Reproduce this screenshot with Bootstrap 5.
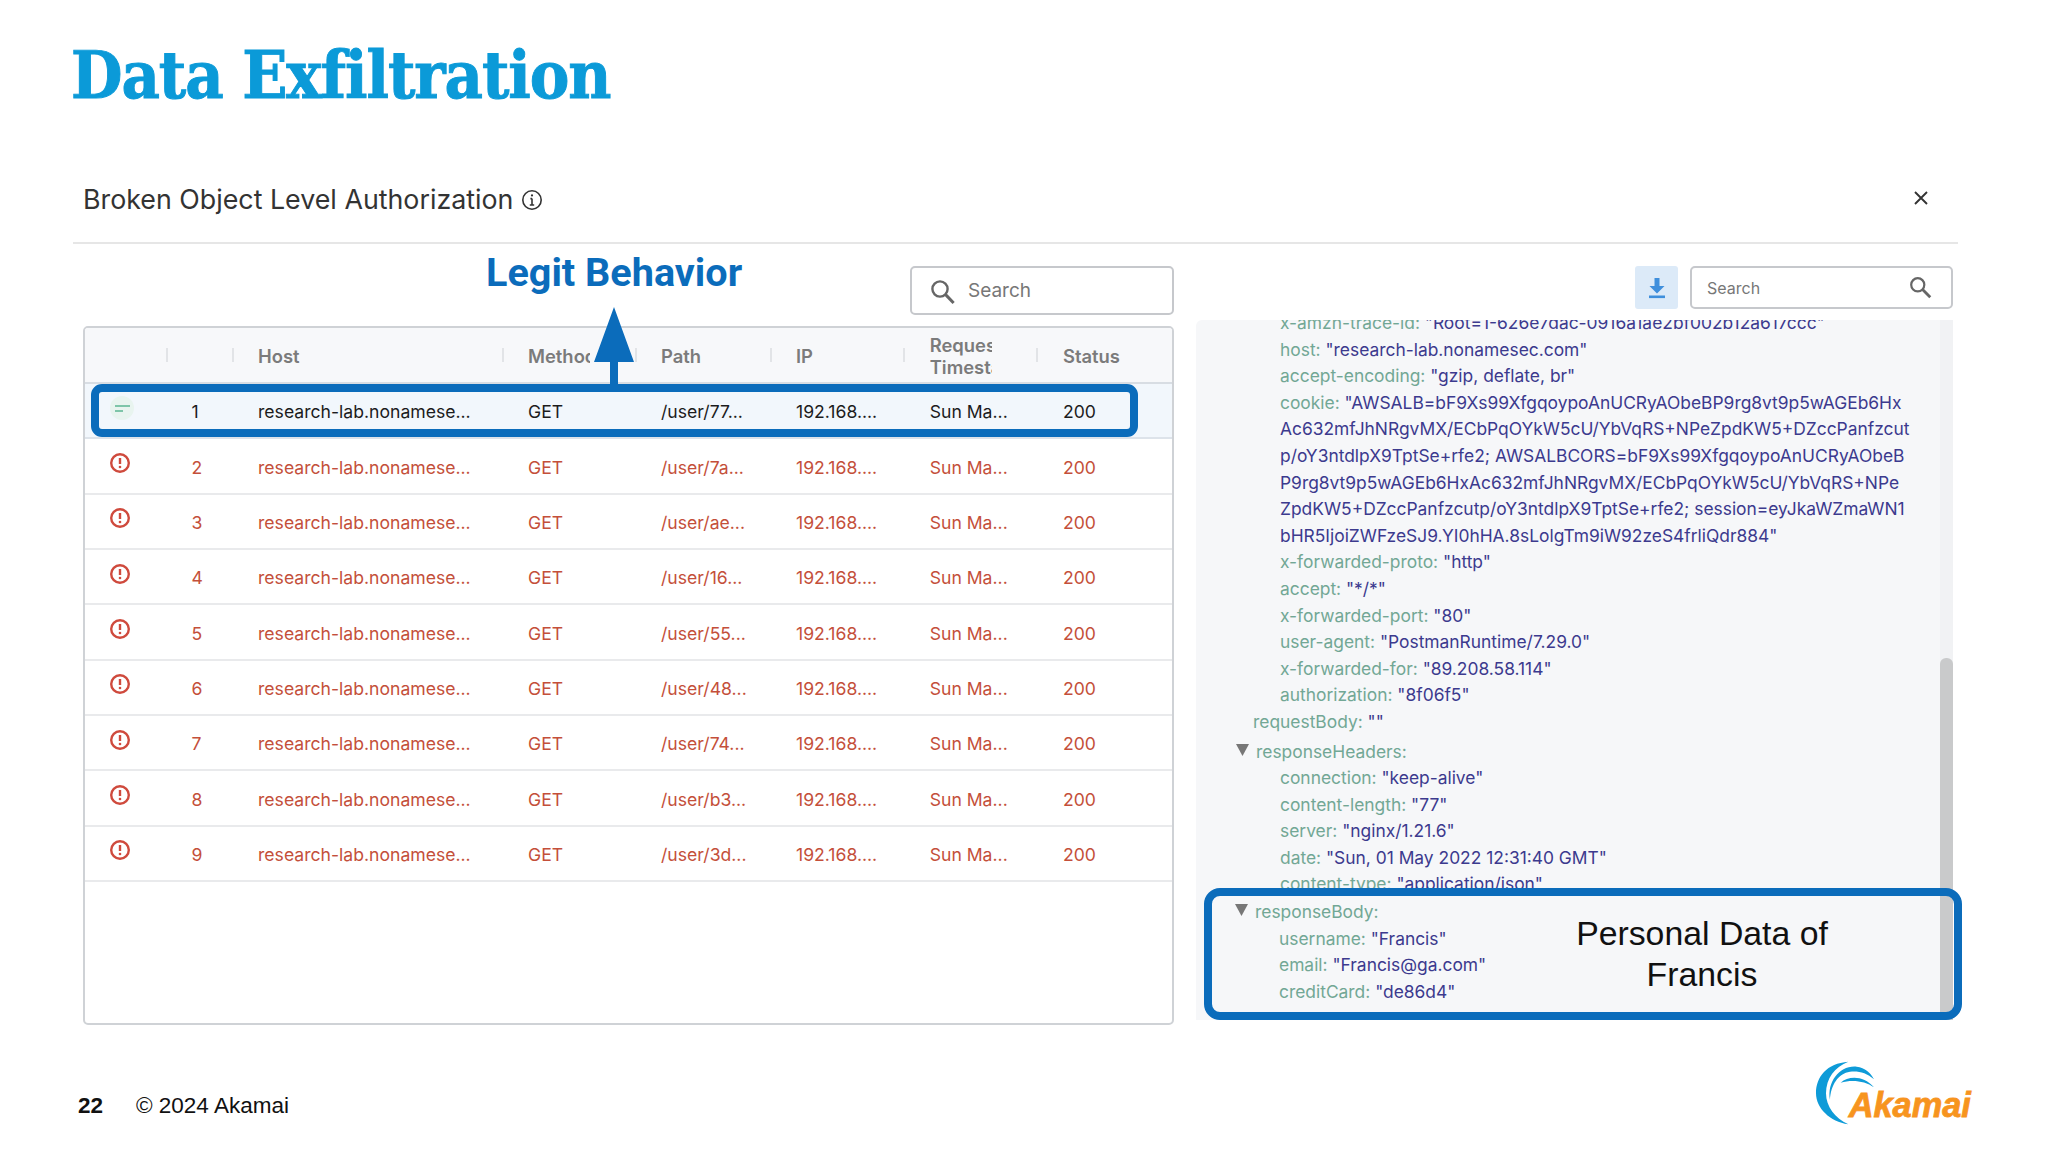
<!DOCTYPE html>
<html lang="en">
<head>
<meta charset="utf-8">
<title>Data Exfiltration</title>
<link href="https://cdn.jsdelivr.net/npm/bootstrap@5.3.0/dist/css/bootstrap.min.css" rel="stylesheet">
<style>
html,body{margin:0;background:#fff;}
.slide{width:2048px;height:1152px;overflow:hidden;font-family:Inter,"Liberation Sans",sans-serif;background:#fff;}
.deck-head{height:165px;padding:27px 0 0 71px;}
.deck-title{font-family:"DejaVu Serif Condensed","DejaVu Serif",serif;font-weight:700;font-size:66px;line-height:96px;letter-spacing:-1.08px;-webkit-text-stroke:.9px #0b9ad8;color:#0b9ad8;margin:0;}
.bar{height:79px;margin-left:73px;width:1885px;border-bottom:2px solid #e6e6e6;padding:0 29px 12px 10px;}
.bar-left{padding-top:4px;}
.bar-title{font-size:26.8px;color:#333;font-weight:400;margin:0;}
.main{padding:22px 0 0 83px;gap:22px;}
.left{width:1091px;height:759px;}
.right{width:757px;height:759px;}
.search-left{width:264px;height:49px;border:2px solid #c6c8cc;border-radius:5px;padding:2px 0 0 18px;gap:12px;font-size:19px;color:#777;margin-bottom:11px;}
.grid-box{height:699px;border:2px solid #cfd2d6;border-radius:5px;overflow:hidden;}
.req{table-layout:fixed;width:100%;margin:0;font-size:17.6px;--bs-table-bg:transparent;}
.req th{height:55px;background:#f7f8fa;color:#7b7b7b;font-weight:600;font-size:18.4px;line-height:22px;padding:2px 0 0 26.5px;vertical-align:middle;border-bottom:2px solid #d8dde3;position:relative;}
.req th.sep::before{content:"";position:absolute;left:0;top:20px;height:14px;width:2px;background:#e2e4e7;}
.req td{height:55.33px;padding:4px 0 0 26.5px;vertical-align:middle;border-bottom:2px solid #e9eaec;color:#c44f3a;white-space:nowrap;}
.req td.ico{padding:0 0 8px 25px;}
.req td.num{padding-left:26px;}
.req tr.pick td{background:#f2f7fc;color:#1c1c1c;border-bottom-color:#dde3ea;}
.clip-w{display:block;width:62px;overflow:hidden;white-space:nowrap;}
.clip-m{display:block;width:62px;overflow:hidden;white-space:nowrap;}
.row-frame{position:absolute;left:8px;top:118px;width:1047px;height:53px;border:8px solid #0b6cbb;border-radius:11px;}
.legit{position:absolute;left:403px;top:-17px;font-family:Roboto,sans-serif;font-weight:700;font-size:39.6px;line-height:48px;color:#0b6cbb;white-space:nowrap;}
.up-arrow{position:absolute;left:510px;top:41px;}
.right-top{gap:12px;height:43px;margin-bottom:11px;}
.dl-btn{width:43px;height:43px;background:#dceaf8;border:0;border-radius:3px;padding:0;}
.search-right{width:263px;height:43px;border:2px solid #c6c8cc;border-radius:5px;padding:0 19px 0 15px;font-size:16px;color:#777;}
.panel{height:700px;background:#f6f7f9;border-radius:6px 6px 0 0;}
.track{position:absolute;right:0;top:0;bottom:0;width:13px;background:#f1f2f4;}
.thumb{position:absolute;right:0;top:338px;bottom:0;width:13px;background:#c9cacb;border-radius:6px 6px 0 0;}
.json-clip{height:568px;overflow:hidden;}
.json{margin-top:-10px;padding-left:84px;font-size:17.4px;line-height:26.6px;white-space:nowrap;}
.line-k{color:#72a795;}
.line-v{color:#3c3a8e;}
.lvl1{margin-left:-27px;}
.tree{margin-left:-24px;position:relative;margin-top:3px;}
.tri{position:absolute;left:-20px;top:5px;}
.resp-frame{position:relative;height:132px;margin:0 -9px 0 8px;border:8px solid #0b6cbb;border-radius:16px;font-size:17.4px;line-height:26.6px;white-space:nowrap;}
.resp-data{width:290px;padding:0 0 0 67px;}
.resp-note{width:400px;font-family:"Liberation Sans",Arial,sans-serif;font-size:33.8px;line-height:40.5px;color:#111;text-align:center;padding-top:17px;}
.foot{padding:0 28px 0 78px;height:127px;font-family:"Liberation Sans",Arial,sans-serif;font-size:22.5px;color:#111;}
.page-no{font-weight:700;width:58px;}
.foot-text{padding-top:64px;}
.logo{margin-top:15px;}
.logo-txt{font-family:"Liberation Sans",Arial,sans-serif;font-weight:700;font-style:italic;font-size:103px;fill:#f7941e;stroke:#f7941e;stroke-width:2.5px;}
</style>
</head>
<body>
<div class="slide">
  <div class="deck-head"><h1 class="deck-title">Data Exfiltration</h1></div>
  <div class="bar d-flex justify-content-between align-items-center">
    <div class="bar-left d-flex align-items-center gap-2">
      <h2 class="bar-title">Broken Object Level Authorization</h2>
      <svg width="22" height="22" viewBox="0 0 22 22" fill="none" stroke="#333" stroke-width="1.6"><circle cx="11" cy="11" r="9.2"/><path d="M11 9.6v6.4M8.8 16h4.4M9.4 9.6H11"/><circle cx="11" cy="6.4" r="1.1" fill="#333" stroke="none"/></svg>
    </div>
    <svg width="16" height="16" viewBox="0 0 16 16" stroke="#333" stroke-width="1.9"><path d="M2 2l12 12M14 2L2 14"/></svg>
  </div>
  <div class="main d-flex">
    <div class="left position-relative">
      <div class="d-flex justify-content-end">
        <div class="search-left d-flex align-items-center">
          <svg width="26" height="26" viewBox="0 0 26 26" fill="none" stroke="#666" stroke-width="2.4"><circle cx="10" cy="10" r="7.6"/><path d="M15.6 15.6l8 8.4" stroke-width="3"/></svg>
          <span>Search</span>
        </div>
      </div>
      <div class="grid-box">
        <table class="req">
          <colgroup><col style="width:80.5px"><col style="width:66px"><col style="width:270px"><col style="width:133px"><col style="width:135px"><col style="width:133.7px"><col style="width:133.3px"><col></colgroup>
          <thead><tr><th></th><th class="sep"></th><th class="sep">Host</th><th class="sep"><span class="clip-m">Method</span></th><th class="sep">Path</th><th class="sep">IP</th><th class="sep"><span class="clip-w">Request</span><span class="clip-w">Timestamp</span></th><th class="sep">Status</th></tr></thead>
          <tbody id="rows"></tbody>
        </table>
      </div>
      <div class="row-frame"></div>
      <div class="legit">Legit Behavior</div>
      <svg class="up-arrow" width="42" height="80" viewBox="0 0 42 80"><path d="M21 0L41 55H25V80H17V55H1Z" fill="#0b6cbb"/></svg>
    </div>
    <div class="right">
      <div class="right-top d-flex justify-content-end">
        <button class="dl-btn d-flex align-items-center justify-content-center" type="button" aria-label="Download">
          <svg width="18" height="22" viewBox="0 0 18 22" fill="#3f8fdc"><path d="M6.5 1h5v8h5L9 16.5 1.5 9h5z"/><rect x="1" y="18.5" width="16" height="2.6"/></svg>
        </button>
        <div class="search-right d-flex align-items-center justify-content-between">
          <span>Search</span>
          <svg width="23" height="23" viewBox="0 0 21 21" fill="none" stroke="#666" stroke-width="2"><circle cx="8" cy="8" r="6"/><path d="M12.4 12.4l7 7" stroke-width="2.6"/></svg>
        </div>
      </div>
      <div class="panel position-relative">
        <div class="track"></div>
        <div class="thumb"></div>
        <div class="json-clip">
          <div class="json">
            <div><span class="line-k">x-amzn-trace-id: </span><span class="line-v">"Root=1-626e7dac-0916a1ae2bf002b12a617ccc"</span></div>
            <div><span class="line-k">host: </span><span class="line-v">"research-lab.nonamesec.com"</span></div>
            <div><span class="line-k">accept-encoding: </span><span class="line-v">"gzip, deflate, br"</span></div>
            <div><span class="line-k">cookie: </span><span class="line-v">"AWSALB=bF9Xs99XfgqoypoAnUCRyAObeBP9rg8vt9p5wAGEb6Hx</span></div>
            <div class="line-v">Ac632mfJhNRgvMX/ECbPqOYkW5cU/YbVqRS+NPeZpdKW5+DZccPanfzcut</div>
            <div class="line-v">p/oY3ntdlpX9TptSe+rfe2; AWSALBCORS=bF9Xs99XfgqoypoAnUCRyAObeB</div>
            <div class="line-v">P9rg8vt9p5wAGEb6HxAc632mfJhNRgvMX/ECbPqOYkW5cU/YbVqRS+NPe</div>
            <div class="line-v">ZpdKW5+DZccPanfzcutp/oY3ntdlpX9TptSe+rfe2; session=eyJkaWZmaWN1</div>
            <div class="line-v">bHR5IjoiZWFzeSJ9.YI0hHA.8sLolgTm9iW92zeS4frliQdr884"</div>
            <div><span class="line-k">x-forwarded-proto: </span><span class="line-v">"http"</span></div>
            <div><span class="line-k">accept: </span><span class="line-v">"*/*"</span></div>
            <div><span class="line-k">x-forwarded-port: </span><span class="line-v">"80"</span></div>
            <div><span class="line-k">user-agent: </span><span class="line-v">"PostmanRuntime/7.29.0"</span></div>
            <div><span class="line-k">x-forwarded-for: </span><span class="line-v">"89.208.58.114"</span></div>
            <div><span class="line-k">authorization: </span><span class="line-v">"8f06f5"</span></div>
            <div class="lvl1"><span class="line-k">requestBody: </span><span class="line-v">""</span></div>
            <div class="tree line-k"><svg class="tri" width="13" height="12" viewBox="0 0 13 12"><path d="M0 0h13L6.5 12z" fill="#777"/></svg>responseHeaders:</div>
            <div><span class="line-k">connection: </span><span class="line-v">"keep-alive"</span></div>
            <div><span class="line-k">content-length: </span><span class="line-v">"77"</span></div>
            <div><span class="line-k">server: </span><span class="line-v">"nginx/1.21.6"</span></div>
            <div><span class="line-k">date: </span><span class="line-v">"Sun, 01 May 2022 12:31:40 GMT"</span></div>
            <div><span class="line-k">content-type: </span><span class="line-v">"application/json"</span></div>
          </div>
        </div>
        <div class="resp-frame d-flex">
          <div class="resp-data">
            <div class="tree line-k"><svg class="tri" width="13" height="12" viewBox="0 0 13 12"><path d="M0 0h13L6.5 12z" fill="#777"/></svg>responseBody:</div>
            <div><span class="line-k">username: </span><span class="line-v">"Francis"</span></div>
            <div><span class="line-k">email: </span><span class="line-v">"Francis@ga.com"</span></div>
            <div><span class="line-k">creditCard: </span><span class="line-v">"de86d4"</span></div>
          </div>
          <div class="resp-note">Personal Data of<br>Francis</div>
        </div>
      </div>
    </div>
  </div>
  <div class="foot d-flex justify-content-between">
    <div class="d-flex foot-text"><span class="page-no">22</span><span>© 2024 Akamai</span></div>
    <svg class="logo" width="220" height="110" viewBox="0 0 660 330">
      <path fill="#0e9bd8" d="M145 65C80 70 48 110 48 160C48 205 90 245 145 253C105 235 78 200 78 160C78 115 105 80 145 65Z"/>
      <path fill="#0e9bd8" d="M90 180C80 125 120 75 170 80C195 83 212 98 222 118C200 98 175 92 150 95C115 100 92 135 90 180Z"/>
      <path fill="#0e9bd8" d="M122 128C145 108 190 105 222 142C195 122 155 118 122 128Z"/>
      <text class="logo-txt" x="146" y="230">Akamai</text>
    </svg>
  </div>
</div>
<script src="https://cdn.jsdelivr.net/npm/bootstrap@5.3.0/dist/js/bootstrap.bundle.min.js"></script>
<script>
var paths=["77","7a","ae","16","55","48","74","b3","3d"],html="";
paths.forEach(function(p,i){
  var ic=i==0?'<svg width="24" height="24" viewBox="0 0 24 24"><circle cx="12" cy="12" r="12" fill="#e8f4ef"/><path d="M5 10h15M5 15h8" stroke="#5bb592" stroke-width="1.7"/></svg>'
  :'<svg width="20" height="20" viewBox="0 0 20 20" fill="none"><circle cx="10" cy="10" r="8.8" stroke="#cf4a3d" stroke-width="2.4"/><path d="M10 5v6" stroke="#cf4a3d" stroke-width="2.4"/><circle cx="10" cy="14" r="1.3" fill="#cf4a3d"/></svg>';
  html+='<tr'+(i==0?' class="pick"':'')+'><td class="ico">'+ic+'</td><td class="num">'+(i+1)+'</td><td>research-lab.nonamese...</td><td>GET</td><td>/user/'+p+'...</td><td>192.168....</td><td>Sun Ma...</td><td>200</td></tr>';
});
document.getElementById("rows").innerHTML=html;
</script>
</body>
</html>
